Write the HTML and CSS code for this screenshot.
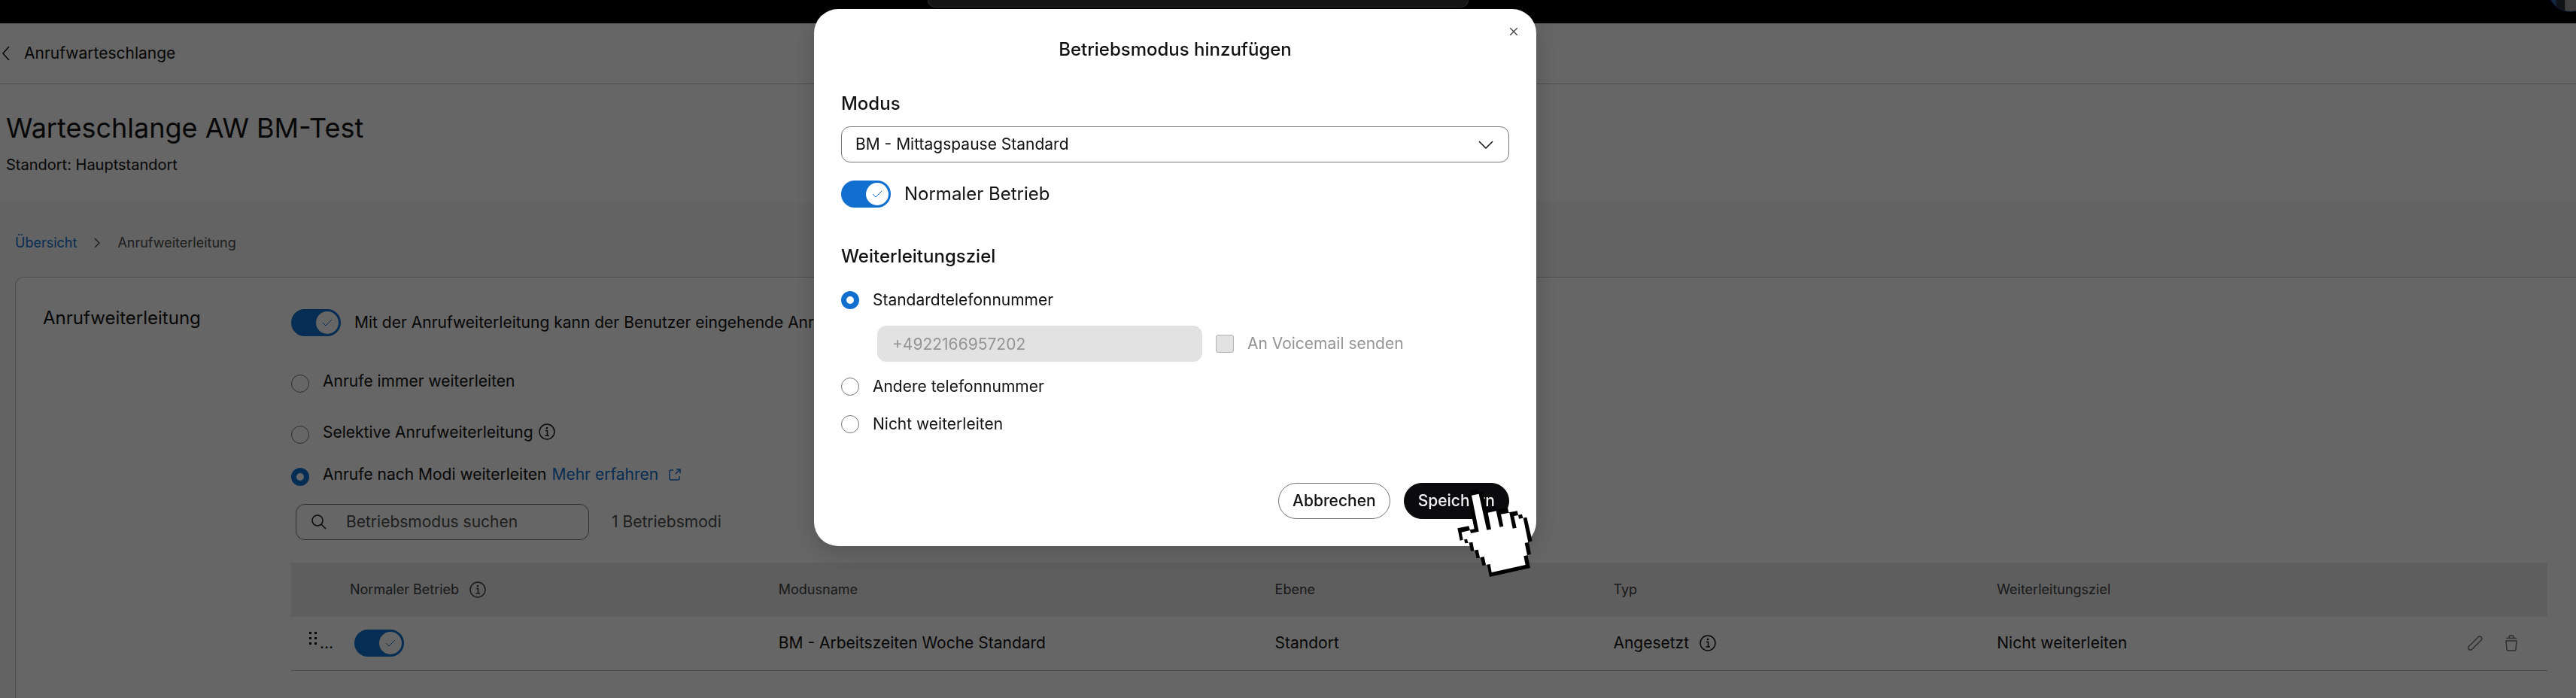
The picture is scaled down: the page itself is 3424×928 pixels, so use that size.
FILE: index.html
```html
<!DOCTYPE html>
<html lang="de">
  <head>
    <meta charset="utf-8">
    <meta name="viewport" content="width=device-width, initial-scale=1.0">
    <title>Warteschlange AW BM-Test</title>
    <link rel="stylesheet" href="styles.css">
  </head>
  <body>
    <header class="topbar">
      <div class="topbar-search"></div>
      <div class="avatar"></div>
    </header>

    <nav class="backbar">
      <svg width="10" height="20" viewBox="0 0 10 20"><path d="M9 1 1 10l8 9"/></svg>
      <a href="#">Anrufwarteschlange</a>
    </nav>

    <div class="page-title">
      <h1>Warteschlange AW BM-Test</h1>
      <p>Standort: Hauptstandort</p>
    </div>

    <main>
      <nav class="breadcrumb">
        <a href="#">Übersicht</a>
        <svg width="8" height="14" viewBox="0 0 8 14"><path d="m1 1 6 6-6 6"/></svg>
        <span>Anrufweiterleitung</span>
      </nav>

      <section class="card">
        <h2>Anrufweiterleitung</h2>
        <div class="settings">
          <div class="toggle-row">
            <span class="toggle">
              <input type="checkbox" id="forwarding" checked>
              <svg viewBox="0 0 66 36"><circle cx="48" cy="18" r="15"/><path d="m42 18 4 4 8-8"/></svg>
            </span>
            <label for="forwarding">Mit der Anrufweiterleitung kann der Benutzer eingehende Anrufe weiterleiten.</label>
          </div>

          <div class="radio-row always">
            <input type="radio" name="forward" id="f-always">
            <label for="f-always">Anrufe immer weiterleiten</label>
          </div>
          <div class="radio-row selective">
            <input type="radio" name="forward" id="f-selective">
            <label for="f-selective">Selektive Anrufweiterleitung</label>
            <svg class="info" viewBox="0 0 22 22"><circle cx="11" cy="11" r="10"/><path d="M9 9.500h2.500V16M8.500 16h5.500"/><circle class="dot" cx="11" cy="6" r="1.300"/></svg>
          </div>
          <div class="radio-row modes">
            <input type="radio" name="forward" id="f-modes" checked>
            <label for="f-modes">Anrufe nach Modi weiterleiten</label>
            <a href="#">Mehr erfahren
              <svg width="16" height="16" viewBox="0 0 16 16"><path d="M6 2H3a2 2 0 0 0-2 2v9a2 2 0 0 0 2 2h9a2 2 0 0 0 2-2v-3M10 1h5v5M15 1 9 7"/></svg>
            </a>
          </div>

          <div class="search-row">
            <div class="search">
              <svg width="20" height="20" viewBox="0 0 20 20"><circle cx="8" cy="8" r="7"/><path d="m13 13 6 6"/></svg>
              <input type="text" placeholder="Betriebsmodus suchen" aria-label="Betriebsmodus suchen">
            </div>
            <span class="count">1 Betriebsmodi</span>
          </div>

          <table>
            <tr>
              <th class="col-drag"></th>
              <th class="col-normal">
                <div class="cell">Normaler Betrieb
                  <svg class="info" viewBox="0 0 22 22"><circle cx="11" cy="11" r="10"/><path d="M9 9.500h2.500V16M8.500 16h5.500"/><circle class="dot" cx="11" cy="6" r="1.300"/></svg>
                </div>
              </th>
              <th class="col-name">Modusname</th>
              <th class="col-level">Ebene</th>
              <th class="col-type">Typ</th>
              <th>Weiterleitungsziel</th>
              <th></th>
            </tr>
            <tr>
              <td>
                <div class="drag">
                  <svg width="10" height="18" viewBox="0 0 10 18"><path d="M0 0h3v3H0zM7 0h3v3H7zM0 7h3v3H0zM7 7h3v3H7zM0 14h3v3H0zM7 14h3v3H7z"/></svg>
                  <span>…</span>
                </div>
              </td>
              <td>
                <span class="toggle in-table">
                  <input type="checkbox" aria-label="Normaler Betrieb" checked>
                  <svg viewBox="0 0 66 36"><circle cx="48" cy="18" r="15"/><path d="m42 18 4 4 8-8"/></svg>
                </span>
              </td>
              <td>BM - Arbeitszeiten Woche Standard</td>
              <td>Standort</td>
              <td>
                <div class="cell">Angesetzt
                  <svg class="info" viewBox="0 0 22 22"><circle cx="11" cy="11" r="10"/><path d="M9 9.500h2.500V16M8.500 16h5.500"/><circle class="dot" cx="11" cy="6" r="1.300"/></svg>
                </div>
              </td>
              <td>Nicht weiterleiten</td>
              <td>
                <div class="actions">
                  <button type="button" aria-label="Bearbeiten">
                    <svg width="20" height="20" viewBox="0 0 20 20"><path d="M1 15 14 2a2.500 2.500 0 0 1 4 4L5 19H3a2 2 0 0 1-2-2z"/></svg>
                  </button>
                  <button type="button" aria-label="Löschen">
                    <svg width="16" height="22" viewBox="0 0 16 22"><path d="M1 4.500h14M5 4V3a2 2 0 0 1 2-2h2a2 2 0 0 1 2 2v1M1 8h14l-1 11a2 2 0 0 1-2 2H4a2 2 0 0 1-2-2z"/></svg>
                  </button>
                </div>
              </td>
            </tr>
          </table>
        </div>
      </section>
    </main>

    <div class="backdrop"></div>

    <div class="modal" role="dialog" aria-labelledby="modal-title">
      <button type="button" class="close" aria-label="Schließen">
        <svg width="10" height="10" viewBox="0 0 10 10"><path d="m0 0 10 10M10 0 0 10"/></svg>
      </button>
      <h2 id="modal-title">Betriebsmodus hinzufügen</h2>

      <label class="heading" for="mode">Modus</label>
      <div class="select">
        <select id="mode">
          <option>BM - Mittagspause Standard</option>
        </select>
        <svg width="20" height="11" viewBox="0 0 20 11"><path d="m1 1 9 9 9-9"/></svg>
      </div>

      <div class="toggle-row">
        <span class="toggle">
          <input type="checkbox" id="normal" checked>
          <svg viewBox="0 0 66 36"><circle cx="48" cy="18" r="15"/><path d="m42 18 4 4 8-8"/></svg>
        </span>
        <label for="normal">Normaler Betrieb</label>
      </div>

      <h3 class="heading target">Weiterleitungsziel</h3>
      <div class="radio-row">
        <input type="radio" name="target" id="t-default" checked>
        <label for="t-default">Standardtelefonnummer</label>
      </div>
      <div class="phone-row">
        <input type="text" class="phone" value="+4922166957202" aria-label="Telefonnummer" disabled>
        <input type="checkbox" class="check" id="voicemail" disabled>
        <label for="voicemail">An Voicemail senden</label>
      </div>
      <div class="radio-row">
        <input type="radio" name="target" id="t-other">
        <label for="t-other">Andere telefonnummer</label>
      </div>
      <div class="radio-row">
        <input type="radio" name="target" id="t-none">
        <label for="t-none">Nicht weiterleiten</label>
      </div>

      <div class="buttons">
        <button type="button" class="btn">Abbrechen</button>
        <button type="button" class="btn primary">Speichern</button>
      </div>

      <!-- hand cursor over the save button -->
      <svg class="cursor" width="120" height="136" viewBox="0 0 360 408">
        <path d="M74 36 103 30 107 46 123 43 136 106 172 100 175 114 222 106 226 124 260 118 264 134 279 131 283 146 298 143 320 238 306 242 315 290 301 294 312 345 150 381 140 333 121 336 114 304 98 307 91 276 75 278 68 245 52 247 48 232 32 236 22 187 67 178 71 193 89 190 62 56 77 53z"/>
        <path class="skin" d="M78 56 107 50 139 194 156 191 143 125 176 118 190 182 205 179 195 131 229 125 242 188 257 185 247 138 264 135 267 149 284 146 304 243 290 246 300 295 286 298 293 333 158 363 152 330 135 333 128 300 111 304 104 272 88 275 82 242 64 245 60 230 44 233 38 203 72 195 75 207 107 200z"/>
      </svg>
    </div>
  </body>
</html>
```

FILE: styles.css
```css
* {
  box-sizing: border-box;
}

body {
  margin: 0;
  height: 100vh;
  overflow: hidden;
  display: flex;
  flex-direction: column;
  font-family: Inter, sans-serif;
  font-size: 21px;
  line-height: 30px;
  color: #121212;
  background-color: #fff;
}

h1, h2, h3, p {
  margin: 0;
  font-weight: normal;
}

a {
  color: #1170cf;
  text-decoration: none;
}

input, select, button {
  font: inherit;
  color: inherit;
  margin: 0;
}

svg {
  display: block;
  flex: none;
  fill: none;
  stroke: currentColor;
  stroke-width: 1.5px;
}

/* page header */

.topbar {
  position: relative;
  height: 31px;
  flex: none;
  overflow: hidden;
  background-color: #000;
}

.topbar-search {
  width: 21%;
  height: 10px;
  margin-left: 36%;
  border: 1px solid #707070;
  border-top: none;
  border-radius: 0 0 12px 12px;
  background-color: #363636;
}

.avatar {
  position: absolute;
  right: -24px;
  bottom: 15px;
  width: 62px;
  height: 62px;
  border-radius: 50%;
  border: 1px solid #1c3f80;
  background: linear-gradient(90deg, #2a64a0 16%, #2c2e38 20%, #2c2e38 36%, #a0a0a0 38%);
}

.backbar {
  display: flex;
  align-items: center;
  gap: 19px;
  height: 81px;
  flex: none;
  padding-left: 3px;
  border-bottom: 1px solid #c4c4c4;
}

.backbar a {
  color: inherit;
}

.page-title {
  padding: 34px 8px;
}

.page-title h1 {
  font-size: 36px;
  line-height: 48px;
  margin-bottom: 8px;
}

.page-title p {
  font-size: 20px;
  line-height: 34px;
}

main {
  display: flex;
  flex-direction: column;
  flex: 1;
  padding: 38px 0 0 20px;
  background-color: #f7f7f7;
}

.breadcrumb {
  display: flex;
  align-items: center;
  gap: 23px;
  font-size: 18px;
  margin-bottom: 30px;
  color: #4d4d4d;
}

/* forwarding settings */

.card {
  display: grid;
  grid-template-columns: 330px 1fr;
  flex: 1;
  padding: 36px 38px 0 36px;
  border: 1px solid #c4c4c4;
  border-right: none;
  border-bottom: none;
  border-radius: 12px 0 0 0;
  background-color: #fff;
}

.card h2 {
  font-size: 24px;
  line-height: 36px;
}

.settings {
  padding-top: 6px;
}

.toggle-row {
  display: flex;
  align-items: center;
  gap: 18px;
}

.toggle {
  display: grid;
  width: 66px;
  height: 36px;
}

.toggle input {
  grid-area: 1 / 1;
  appearance: none;
  border-radius: 18px;
  background-color: #8c8c8c;
}

.toggle input:checked {
  background-color: #1170cf;
}

.toggle svg {
  grid-area: 1 / 1;
  pointer-events: none;
  stroke: #1170cf;
  stroke-width: 1px;
}

.toggle circle {
  fill: #fff;
  stroke: none;
}

.toggle.in-table {
  margin-left: 6px;
}

.radio-row {
  display: flex;
  align-items: flex-end;
}

.radio-row input {
  appearance: none;
  width: 24px;
  height: 24px;
  margin-right: 18px;
  border: 1px solid #757575;
  border-radius: 50%;
  background-color: #fff;
}

.radio-row input:checked {
  border: 7px solid #1170cf;
}

.always {
  margin-top: 45px;
}

.selective {
  margin-top: 38px;
}

.selective .info {
  margin: 0 0 5px 7px;
}

.modes {
  margin-top: 26px;
}

.modes a {
  display: flex;
  align-items: center;
  gap: 14px;
  margin-left: 7px;
}

.info {
  width: 22px;
  height: 22px;
}

.info .dot {
  fill: currentColor;
  stroke: none;
}

.search-row {
  display: flex;
  align-items: center;
  gap: 30px;
  margin: 24px 0 30px 6px;
}

.search {
  display: flex;
  align-items: center;
  gap: 26px;
  width: 390px;
  height: 48px;
  padding: 0 20px;
  border: 1px solid #757575;
  border-radius: 12px;
}

.search input {
  flex: 1;
  min-width: 0;
  padding: 0;
  border: none;
  outline: none;
  background: none;
}

.search input::placeholder, .count {
  color: #4d4d4d;
}

table {
  width: 100%;
  table-layout: fixed;
  border-collapse: collapse;
}

th {
  height: 72px;
  padding: 0;
  font-size: 18px;
  font-weight: normal;
  text-align: left;
  color: #404040;
  background-color: #ebebeb;
}

td {
  height: 71px;
  padding: 0;
  border-bottom: 1px solid #b8b8b8;
}

.col-drag {
  width: 78px;
}

.col-normal {
  width: 19%;
}

.col-name {
  width: 22%;
}

.col-level {
  width: 15%;
}

.col-type {
  width: 17%;
}

.cell {
  display: flex;
  align-items: center;
  gap: 14px;
}

.drag {
  display: flex;
  align-items: flex-start;
  gap: 4px;
  padding-left: 24px;
}

.drag svg {
  fill: currentColor;
  stroke: none;
}

.actions {
  display: flex;
  align-items: center;
  justify-content: flex-end;
  gap: 30px;
  padding-right: 40px;
}

.actions button {
  padding: 0;
  border: none;
  background: none;
  color: #757575;
}

/* dialog */

.backdrop {
  position: fixed;
  inset: 0;
  background-color: rgba(0, 0, 0, 0.6);
}

.modal {
  position: fixed;
  top: 12px;
  left: 31.6%;
  width: 960px;
  padding: 36px;
  border-radius: 32px;
  background-color: #fff;
  box-shadow: 0 8px 32px rgba(0, 0, 0, 0.2);
}

.modal h2 {
  margin-bottom: 36px;
  font-size: 24px;
  font-weight: 500;
  line-height: 36px;
  text-align: center;
}

.heading {
  display: block;
  font-size: 24px;
  font-weight: 500;
  line-height: 36px;
}

.close {
  position: absolute;
  top: 25px;
  right: 25px;
  padding: 0;
  border: none;
  background: none;
  color: #4d4d4d;
}

.select {
  display: grid;
  align-items: center;
  margin: 12px 0 24px;
}

.select select {
  grid-area: 1 / 1;
  appearance: none;
  height: 48px;
  padding: 0 18px;
  border: 1px solid #757575;
  border-radius: 12px;
  background-color: #fff;
}

.select svg {
  grid-area: 1 / 1;
  justify-self: end;
  margin-right: 21px;
  pointer-events: none;
}

.modal .toggle-row {
  font-size: 24px;
}

.target {
  margin: 47px 0 25px;
}

.modal .radio-row {
  align-items: center;
}

.phone-row {
  display: flex;
  align-items: center;
  gap: 18px;
  margin: 19px 0 18px 48px;
  color: #949494;
}

.phone {
  width: 432px;
  height: 48px;
  padding: 0 20px;
  border: none;
  border-radius: 12px;
  background-color: #e2e2e2;
}

.check {
  appearance: none;
  width: 24px;
  height: 24px;
  border: 1px solid #b2b2b2;
  border-radius: 3px;
  background-color: #e2e2e2;
}

.phone-row + .radio-row {
  margin-bottom: 20px;
}

.buttons {
  display: flex;
  justify-content: flex-end;
  gap: 18px;
  margin-top: 63px;
}

.btn {
  height: 48px;
  padding: 0 18px;
  border: 1px solid #757575;
  border-radius: 24px;
  font-weight: 500;
  background-color: #fff;
}

.primary {
  border-color: #0b0b0e;
  color: #f2f2f2;
  background-color: #0b0b0e;
}

.cursor {
  position: absolute;
  right: -8px;
  bottom: -50px;
  fill: #000;
  stroke: none;
}

.cursor .skin {
  fill: #fff;
}
```
